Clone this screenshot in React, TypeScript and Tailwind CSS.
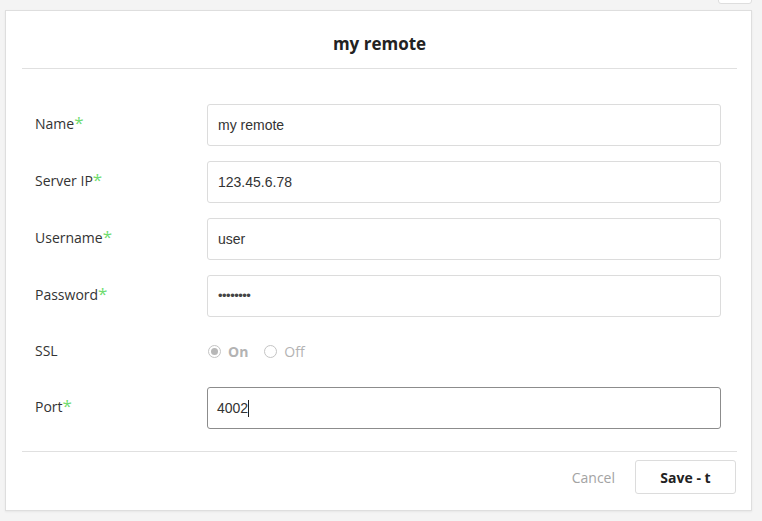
import React from "react";

const fields = [
  { label: "Name", value: "my remote", required: true },
  { label: "Server IP", value: "123.45.6.78", required: true },
  { label: "Username", value: "user", required: true },
  { label: "Password", value: "••••••••", required: true, password: true },
];

const Label = ({ text, required }: { text: string; required?: boolean }) => (
  <div className="w-[172px] shrink-0 pb-[3px] text-[14px] text-[#333] font-['Open_Sans',sans-serif]">
    {text}
    {required && <span className="text-[#6fdc6f] text-[17px] leading-none">*</span>}
  </div>
);

export default function App() {
  return (
    <div className="relative w-full h-[521px] bg-[#f4f4f4] pt-[10px] px-[5px] overflow-hidden">
      {/* tab peeking above the dialog */}
      <div className="absolute right-[10px] top-[-12px] w-[34px] h-[16px] bg-white border border-[#dedede] rounded-[3px]" />

      <div className="w-[747px] h-[501px] bg-white border border-[#dedede] shadow-[0_1px_2px_rgba(0,0,0,0.06)] pl-[16px] pr-[14px] flex flex-col">
        <div className="h-[58px] flex items-center justify-center pt-[8px] border-b border-[#e0e0e0]">
          <h2 className="text-[17px] font-bold text-[#222] font-['Open_Sans',sans-serif]">my remote</h2>
        </div>

        <div className="pt-[35px] pl-[13px] pr-[16px] flex flex-col gap-[15px]">
          {fields.map((f) => (
            <div key={f.label} className="flex items-center">
              <Label text={f.label} required={f.required} />
              <div className="flex-1 h-[42px] border border-[#dcdcdc] rounded-[3px] flex items-center px-[10px] text-[14px] text-[#333] font-['Liberation_Sans',Arial,sans-serif]">
                {f.password ? (
                  <span className="tracking-[-0.5px] text-[13px] text-[#444]">{f.value}</span>
                ) : (
                  f.value
                )}
              </div>
            </div>
          ))}

          <div className="flex items-center h-[40px]">
            <Label text="SSL" />
            <div className="flex items-center pb-[1px] text-[14px] text-[#b3b3b3] font-['Open_Sans',sans-serif]">
              <span className="w-[13px] h-[13px] rounded-full border border-[#c4c4c4] flex items-center justify-center ml-[1px]">
                <span className="w-[7px] h-[7px] rounded-full bg-[#b8b8b8]" />
              </span>
              <span className="ml-[7px] font-bold">On</span>
              <span className="w-[13px] h-[13px] rounded-full border border-[#c4c4c4] ml-[16px]" />
              <span className="ml-[7px]">Off</span>
            </div>
          </div>

          <div className="flex items-center">
            <Label text="Port" required />
            <div className="flex-1 h-[42px] border border-[#8c8c8c] rounded-[3px] flex items-center px-[9px] text-[14px] text-[#333] font-['Liberation_Sans',Arial,sans-serif]">
              4002<span className="inline-block w-[1px] h-[17px] bg-[#222]" />
            </div>
          </div>
        </div>

        <div className="mt-[22px] border-t border-[#e0e0e0] flex justify-end items-center pt-[8px] pr-[1px] gap-[20px] font-['Open_Sans',sans-serif] text-[14px]">
          <button className="text-[#a3a3a3]">Cancel</button>
          <button className="w-[101px] h-[34px] border border-[#dcdcdc] rounded-[3px] bg-white font-bold text-[#222]">
            Save - t
          </button>
        </div>
      </div>
    </div>
  );
}
